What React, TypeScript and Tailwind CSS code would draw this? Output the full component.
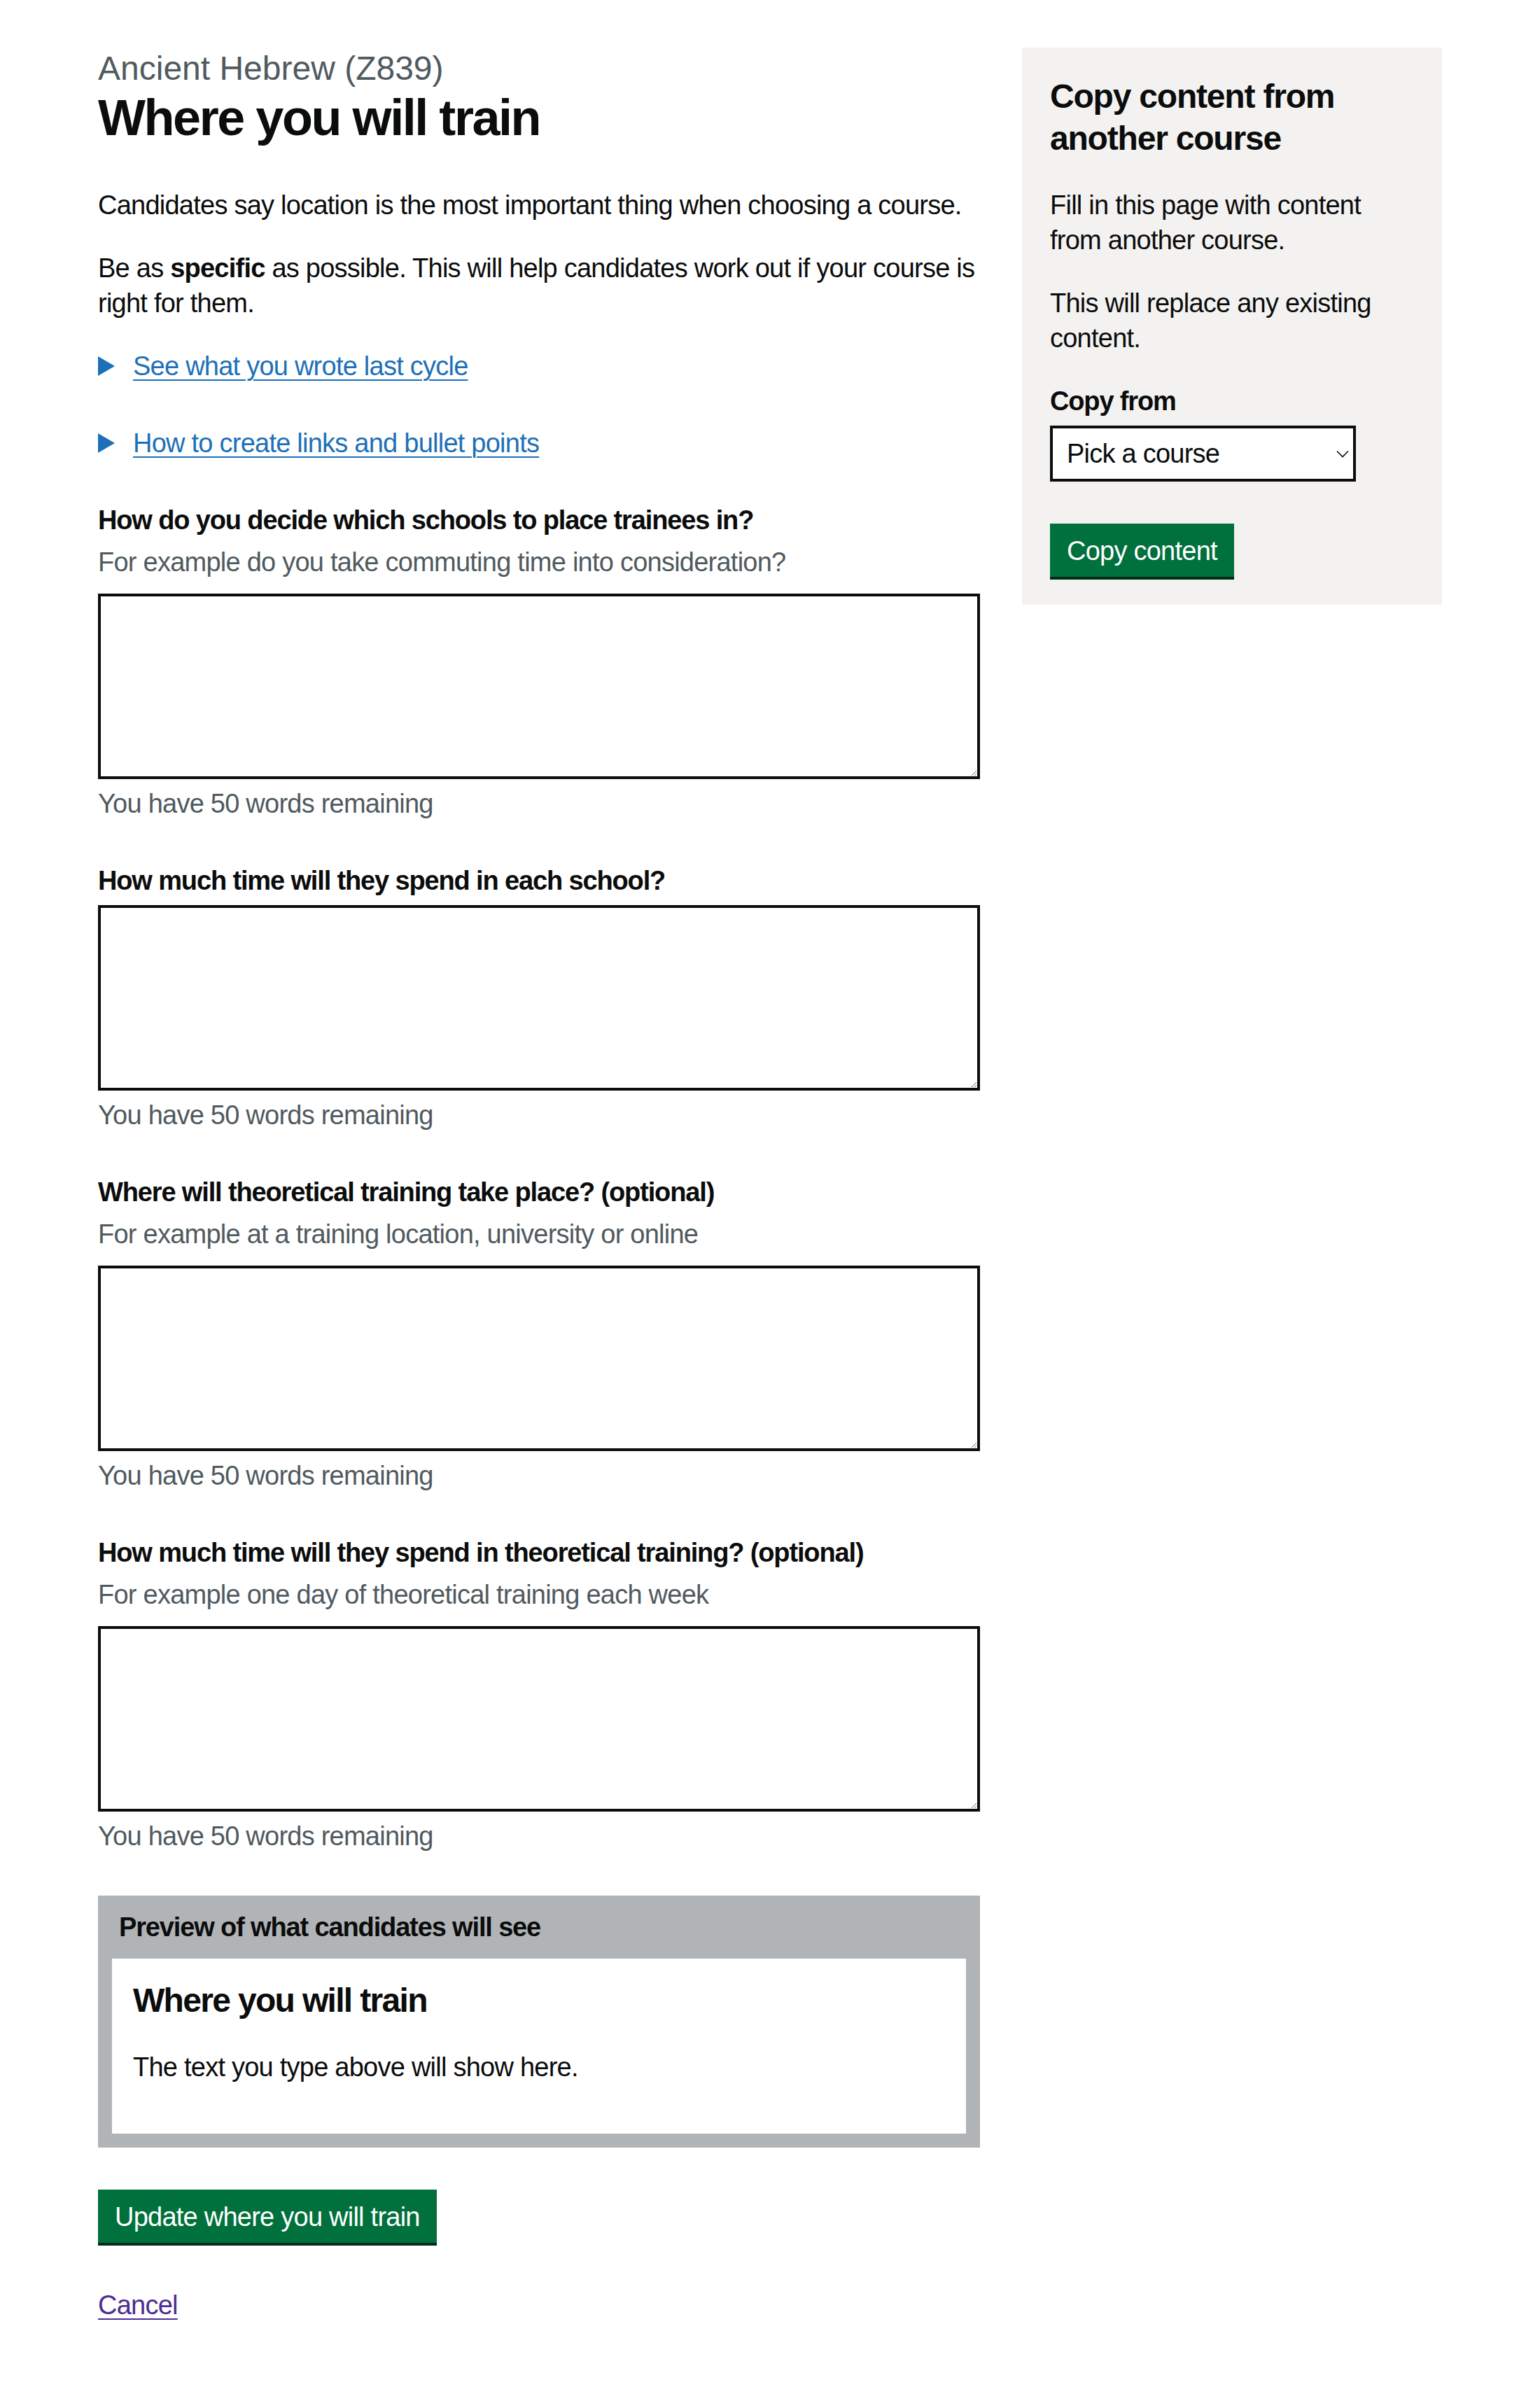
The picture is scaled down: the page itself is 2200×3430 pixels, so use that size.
const Label = ({ children }: { children: React.ReactNode }) => (
  <label className="mb-[10px] block text-[38px] font-bold leading-[50px] tracking-[-0.03em]">
    {children}
  </label>
);

const Hint = ({ children }: { children: React.ReactNode }) => (
  <div className="mb-[20px] text-[38px] leading-[50px] tracking-[-0.02em] text-[#505a5f]">
    {children}
  </div>
);

const WordCountField = ({ label, hint }: { label: string; hint?: string }) => (
  <div className="mb-[60px]">
    <Label>{label}</Label>
    {hint && <Hint>{hint}</Hint>}
    <textarea
      className="mb-[10px] block h-[265px] w-full resize-y rounded-none border-[4px] border-[#0b0c0c] bg-white p-[10px] text-[38px] leading-[50px] outline-none"
      rows={5}
    />
    <div className="text-[38px] leading-[50px] tracking-[-0.02em] text-[#505a5f]">
      You have 50 words remaining
    </div>
  </div>
);

const Details = ({ text }: { text: string }) => (
  <div className="mb-[60px] flex items-center">
    <svg width="24" height="28" viewBox="0 0 24 28" className="mr-[26px] shrink-0">
      <polygon points="0,0 24,14 0,28" fill="#1d70b8" />
    </svg>
    <a
      href="#"
      className="text-[38px] leading-[50px] tracking-[-0.02em] text-[#1d70b8] underline decoration-[2px] underline-offset-[6px]"
    >
      {text}
    </a>
  </div>
);

const GreenButton = ({ children }: { children: React.ReactNode }) => (
  <button
    type="button"
    className="border-[4px] border-transparent bg-[#00703c] px-[20px] pt-[16px] pb-[14px] text-[38px] leading-[38px] tracking-[-0.02em] text-white shadow-[0_4px_0_#002d18]"
  >
    {children}
  </button>
);

export default function App() {
  return (
    <div className="min-h-[3430px] bg-white font-['Liberation_Sans',Arial,sans-serif] text-[#0b0c0c]">
      <div className="mx-auto flex w-[1920px] items-start gap-[60px] pt-[68px]">
        <main className="w-[1260px] shrink-0">
          <span className="block text-[48px] leading-[60px] text-[#505a5f]">Ancient Hebrew (Z839)</span>
          <h1 className="mb-[60px] text-[72px] font-bold leading-[80px] tracking-[-0.034em]">
            Where you will train
          </h1>

          <p className="mb-[40px] text-[38px] leading-[50px] tracking-[-0.02em]">
            Candidates say location is the most important thing when choosing a course.
          </p>
          <p className="mb-[40px] text-[38px] leading-[50px] tracking-[-0.02em]">
            Be as <strong className="font-bold">specific</strong> as possible. This will help candidates work
            out if your course is right for them.
          </p>

          <Details text="See what you wrote last cycle" />
          <Details text="How to create links and bullet points" />

          <WordCountField
            label="How do you decide which schools to place trainees in?"
            hint="For example do you take commuting time into consideration?"
          />
          <WordCountField label="How much time will they spend in each school?" />
          <WordCountField
            label="Where will theoretical training take place? (optional)"
            hint="For example at a training location, university or online"
          />
          <WordCountField
            label="How much time will they spend in theoretical training? (optional)"
            hint="For example one day of theoretical training each week"
          />

          <div className="mt-[2px] mb-[60px] bg-[#b1b4b6] p-[20px]">
            <div className="mb-[20px] px-[10px] text-[38px] font-bold leading-[50px] tracking-[-0.03em]">
              Preview of what candidates will see
            </div>
            <div className="bg-white p-[30px]">
              <h2 className="mb-[40px] text-[48px] font-bold leading-[60px] tracking-[-0.035em]">
                Where you will train
              </h2>
              <p className="mb-[40px] text-[38px] leading-[50px] tracking-[-0.02em]">
                The text you type above will show here.
              </p>
            </div>
          </div>

          <div className="mb-[64px]">
            <GreenButton>Update where you will train</GreenButton>
          </div>

          <p className="text-[38px] leading-[50px] tracking-[-0.02em]">
            <a href="#" className="text-[#4c2c92] underline decoration-[2px] underline-offset-[6px]">
              Cancel
            </a>
          </p>
        </main>

        <aside className="w-[600px] shrink-0 bg-[#f3f2f1] p-[40px]">
          <h2 className="mb-[40px] text-[48px] font-bold leading-[60px] tracking-[-0.025em]">
            Copy content from another course
          </h2>
          <p className="mb-[40px] text-[38px] leading-[50px] tracking-[-0.02em]">
            Fill in this page with content from another course.
          </p>
          <p className="mb-[40px] text-[38px] leading-[50px] tracking-[-0.02em]">
            This will replace any existing content.
          </p>
          <Label>Copy from</Label>
          <div className="relative mb-[60px] w-[437px]">
            <select className="block h-[80px] w-full appearance-none rounded-none border-[4px] border-[#0b0c0c] bg-white pl-[20px] text-[38px] tracking-[-0.02em] outline-none">
              <option>Pick a course</option>
            </select>
            <svg
              width="18"
              height="11"
              viewBox="0 0 18 11"
              className="pointer-events-none absolute right-[10px] top-[35px]"
            >
              <path d="M1 1.5l8 8 8-8" fill="none" stroke="#0b0c0c" strokeWidth="1.6" />
            </svg>
          </div>
          <GreenButton>Copy content</GreenButton>
        </aside>
      </div>
    </div>
  );
}
